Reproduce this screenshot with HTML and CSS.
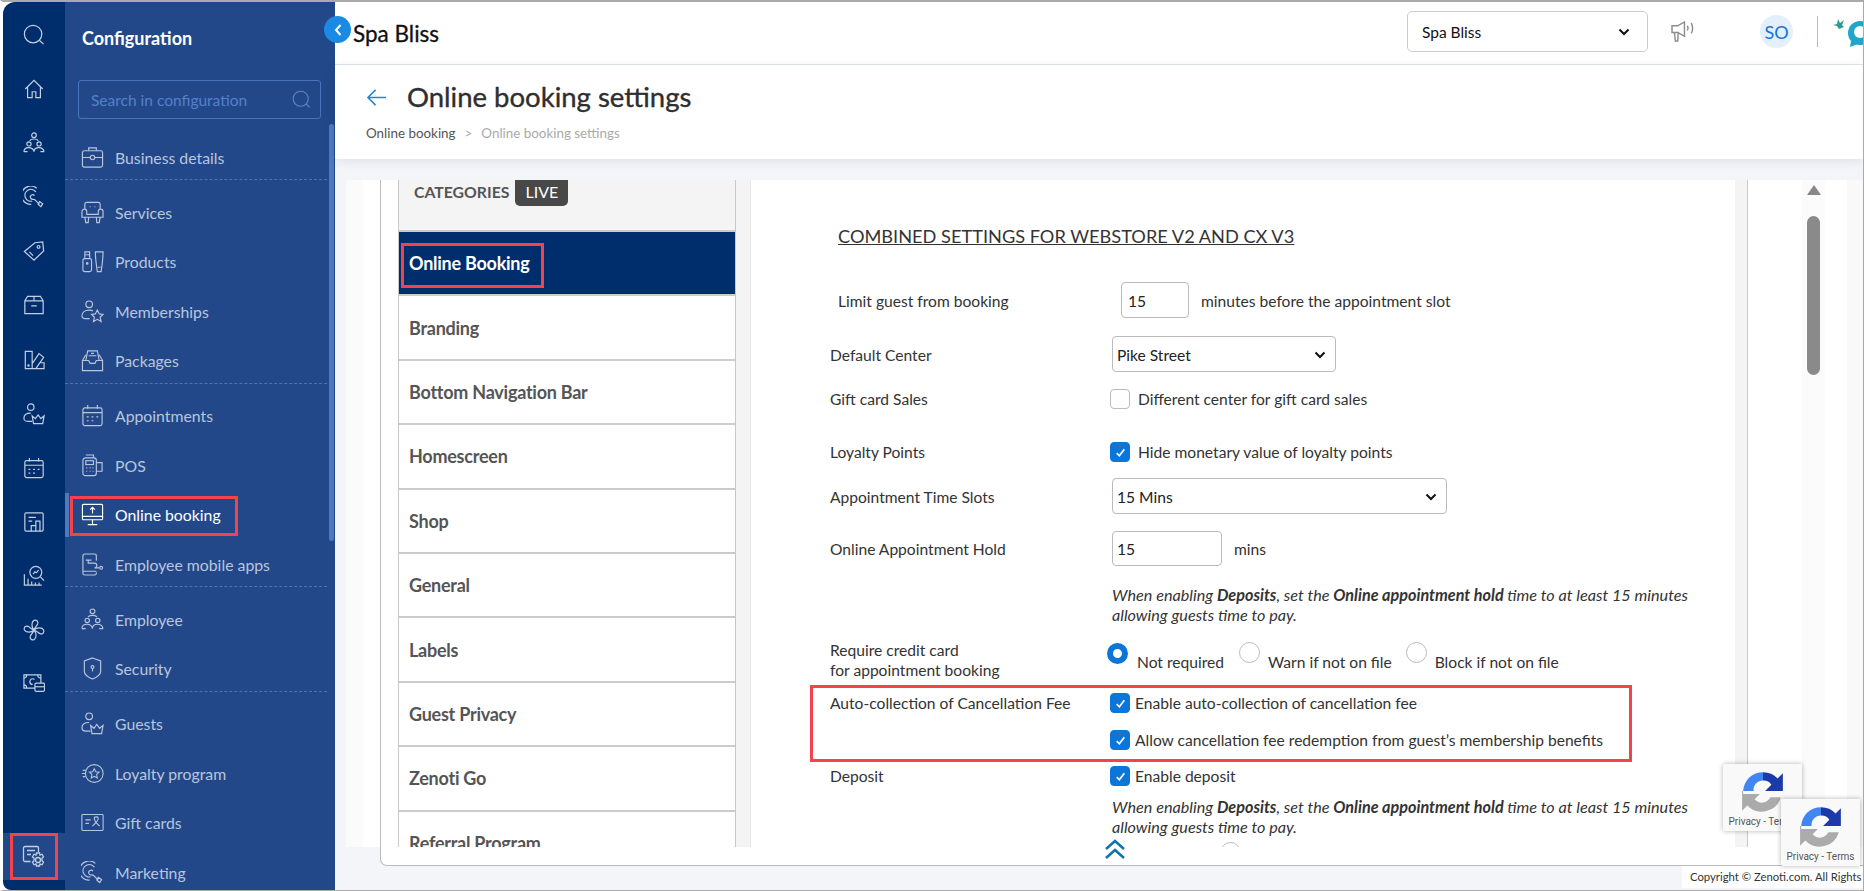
FILE: index.html
```html
<!DOCTYPE html>
<html lang="en">
<head>
    <meta charset="UTF-8">
    <title>Online booking settings</title>
    <link rel="stylesheet" href="styles.css">
</head>
<body>
<!-- icon set, reused by the rail and the config menu -->
<svg class="icon-defs" xmlns="http://www.w3.org/2000/svg">
    <symbol id="i-search" viewBox="0 0 24 24"><circle cx="11" cy="11" r="9.5"/><path d="M18 18l4.5 4"/></symbol>
    <symbol id="i-home" viewBox="0 0 24 24"><path d="M2.5 12L12 2.5 21.500 12M5 9.500V21.500h5V15h4v6.500h5V9.500"/></symbol>
    <symbol id="i-people" viewBox="0 0 24 24"><circle cx="12" cy="3.500" r="2.500"/><circle cx="6.500" cy="13" r="2.300"/><circle cx="17.500" cy="13" r="2.300"/><path d="M7.500 9.500c1-2.500 8-2.500 9 0M1 21.500c0-6 10-6 11 0M12 21.500c0-6 10-6 11 0M1 21.500h4M19 21.500h4"/></symbol>
    <symbol id="i-target" viewBox="0 0 24 24"><path d="M15 2.500A10 10 0 1 0 9 20M14 6.500a6.500 6.500 0 1 0-4 10M12.500 10.500a2.500 2.500 0 1 0-1.500 4l2 .5 5 5"/><path d="M18 17l3.500 2.500-2 3-3-2.500z"/></symbol>
    <symbol id="i-tag" viewBox="0 0 24 24"><path d="M1.500 12.500L13 3l8.500-1 1 10L12 22z"/><circle cx="17" cy="7.500" r="1.500"/><path d="M7 13l4 4"/></symbol>
    <symbol id="i-box" viewBox="0 0 24 24"><path d="M2 7.500L5 2.500h14l3 5V21.500H2zM2 7.500h20M12 2.500v5M9 13h6"/></symbol>
    <symbol id="i-palette" viewBox="0 0 24 24"><path d="M2.500 2.500h7.500v19H2.500zM10 16l7.500-11 5 4L14 21.500M10 21.500h13V15h-5"/><circle cx="6" cy="18" r=".7"/></symbol>
    <symbol id="i-crown" viewBox="0 0 24 24"><circle cx="8.500" cy="4.500" r="3.500"/><path d="M10 20H5c-2.500 0-4-1.500-4-3.500C1 13 4 11 8.500 11"/><path d="M10 14l3.500 3 3-4 3 4 3.500-3-1.500 8.500h-10z"/></symbol>
    <symbol id="i-calendar" viewBox="0 0 24 24"><rect x="2" y="4" width="20" height="18.500" rx="2"/><path d="M7 1v4M17 1v4M2 9h20M6 13.500h2M11 13.500h2M16 13.500h2M6 17.500h2M11 17.500h2"/></symbol>
    <symbol id="i-chart" viewBox="0 0 24 24"><rect x="2" y="2" width="20" height="20" rx="1.500"/><path d="M6 7h8M6 11h4M9 22v-6h5v6M14 22V11h4.500v11"/></symbol>
    <symbol id="i-analytics" viewBox="0 0 24 24"><path d="M1.500 10v12h19M5.500 22v-7M9.500 22v-4M13.500 22v-3M17.500 22v-3"/><circle cx="14" cy="8" r="6.500"/><path d="M19 13l4 4M11 10l2-2.500 1.500 1L17 5.500"/></symbol>
    <symbol id="i-fan" viewBox="0 0 24 24"><path d="M12 12C9 9 9 3 12 1.500c3-1 5 1.500 4 4-1 2-3 3.500-4 6.500zM12 12c3-3 9-3 10.500 0 1 3-1.500 5-4 4-2-1-3.500-3-6.500-4zM12 12c3 3 3 9 0 10.500-3 1-5-1.500-4-4 1-2 3-3.500 4-6.500zM12 12c-3 3-9 3-10.500 0-1-3 1.500-5 4-4 2 1 3.500 3 6.500 4z"/></symbol>
    <symbol id="i-money" viewBox="0 0 24 24"><path d="M13 16.500H1V2h18.500v9"/><path d="M1 5.500c2 0 3-1.500 3-3.500M16 2c0 2 1 3.500 3.500 3.500M1 13c2 0 3 1.500 3 3.500M12.500 7c-2-1.500-5-.5-5 2.500 0 1.500 1 3 3 3"/><rect x="13" y="11" width="10.500" height="9" rx="1.500"/><path d="M13 15h10.500"/></symbol>
    <symbol id="i-settings" viewBox="0 0 24 24"><path d="M8.500 16.500H3a1.500 1.500 0 0 1-1.500-1.500V3A1.500 1.500 0 0 1 3 1.500h12A1.500 1.500 0 0 1 16.500 3v4M5 5.500h8M5 9.500h4"/><path d="M14.500 8h3l.5 2 2-.8 1.500 2.600-1.500 1.400v2.600l1.500 1.400-1.500 2.600-2-.8-.5 2h-3l-.5-2-2 .8-1.500-2.600 1.500-1.400v-2.600l-1.500-1.400 1.500-2.600 2 .8z"/><circle cx="16" cy="15" r="2.500"/></symbol>
    <symbol id="i-briefcase" viewBox="0 0 24 24"><rect x="1.500" y="5" width="21" height="17" rx="2"/><path d="M8 5V2h8v3M1.500 12H9.500M14.500 12h8"/><circle cx="12" cy="12" r="2.300"/></symbol>
    <symbol id="i-sofa" viewBox="0 0 24 24"><path d="M4 9V3.500A2 2 0 0 1 6 1.500h12A2 2 0 0 1 20 3.500V9M1 11a2.500 2.500 0 0 1 5 0v3h12v-3a2.500 2.500 0 0 1 5 0v6H1zM4 17l1 5.500h2.500l.5-5.500M16 17l.5 5.500H19l1-5.500M9 6h1M14 6h1"/></symbol>
    <symbol id="i-bottles" viewBox="0 0 24 24"><path d="M2 11a2 2 0 0 1 2-2h5a2 2 0 0 1 2 2v9.500a2 2 0 0 1-2 2H4a2 2 0 0 1-2-2zM4 9V2h5v7M4 5h5M15 2h8c0 7-1 14-2 20.500h-4C16 16 15 9 15 2zM17.500 18h3"/><circle cx="6.500" cy="14" r=".8"/></symbol>
    <symbol id="i-member" viewBox="0 0 24 24"><circle cx="8.500" cy="4.500" r="3.500"/><path d="M9 19.500H4.500C2 19.500 1 18 1 16.500 1 13 4 10.500 8.500 10.500c1.500 0 3 .3 4 1"/><path d="M17 10.500l2 4 4 .5-3 3 1 4.500-4-2.300-4 2.300 1-4.500-3-3 4-.5z"/></symbol>
    <symbol id="i-tray" viewBox="0 0 24 24"><path d="M5 12l2-10h10l2 10M1.500 12H8l1.500 3h5L16 12h6.500v10.500h-21zM1.500 12l3.500-6M22.500 12L19 6M8 7h8M10.500 4.500h3"/></symbol>
    <symbol id="i-pos" viewBox="0 0 24 24"><rect x="2" y="4" width="14" height="18.500" rx="2.500"/><rect x="5" y="7" width="8" height="4"/><path d="M5 1h8v3M16 9h6v9h-6M5.500 14.500h1M9 14.500h1M12 14.500h1M5.500 18h1M9 18h1M12 18h1"/></symbol>
    <symbol id="i-monitor" viewBox="0 0 24 24"><rect x="1.500" y="1.500" width="21" height="16" rx="1"/><path d="M1.500 14h21M12 17.500v5M7 22.500h10M12 11V4.500M9.500 7L12 4.500 14.500 7"/></symbol>
    <symbol id="i-mobile" viewBox="0 0 24 24"><path d="M16 8V3a2 2 0 0 0-2-2H4A2 2 0 0 0 2 3v18a2 2 0 0 0 2 2h10a2 2 0 0 0 2-2v-1M2 19h14M5 7.500h6M7.500 7.500v3h6.500a2 2 0 0 1 0 5h5"/><circle cx="21" cy="15.500" r="1.500"/></symbol>
    <symbol id="i-shield" viewBox="0 0 24 24"><path d="M12 1l8.500 3v11c0 3-4 6-8.500 8-4.500-2-8.500-5-8.500-8V4z"/><circle cx="12" cy="10.500" r="1.500"/><path d="M12 12v3"/></symbol>
    <symbol id="i-loyalty" viewBox="0 0 26 24"><circle cx="15" cy="12" r="10"/><path d="M15 6.500l1.700 3.500 3.800.5-2.800 2.600.7 3.900-3.400-1.900-3.400 1.900.7-3.900-2.800-2.600 3.800-.5zM1 12h4M2 8.500h3M2 15.500h3"/></symbol>
    <symbol id="i-gift" viewBox="0 0 26 24"><rect x="1" y="3" width="24" height="18" rx="1"/><path d="M5 9h6M5 13h4M17 12c-4-6-1-7 0-6 1-1 5 0 0 6l4 4M17 12l-4 4"/></symbol>
</svg>

<div class="app">
    <nav class="rail">
        <svg class="rail-icon"><use href="#i-search"/></svg>
        <svg class="rail-icon"><use href="#i-home"/></svg>
        <svg class="rail-icon"><use href="#i-people"/></svg>
        <svg class="rail-icon"><use href="#i-target"/></svg>
        <svg class="rail-icon"><use href="#i-tag"/></svg>
        <svg class="rail-icon"><use href="#i-box"/></svg>
        <svg class="rail-icon"><use href="#i-palette"/></svg>
        <svg class="rail-icon"><use href="#i-crown"/></svg>
        <svg class="rail-icon"><use href="#i-calendar"/></svg>
        <svg class="rail-icon"><use href="#i-chart"/></svg>
        <svg class="rail-icon"><use href="#i-analytics"/></svg>
        <svg class="rail-icon"><use href="#i-fan"/></svg>
        <svg class="rail-icon"><use href="#i-money"/></svg>
        <div class="rail-settings"><svg class="rail-icon"><use href="#i-settings"/></svg></div>
    </nav>

    <aside class="panel">
        <h1 class="panel-title">Configuration</h1>
        <div class="panel-search">
            <span>Search in configuration</span>
            <svg class="panel-search-icon"><use href="#i-search"/></svg>
        </div>
        <div class="menu">
            <div class="menu-group">
                <a class="menu-item"><svg><use href="#i-briefcase"/></svg>Business details</a>
            </div>
            <div class="menu-group">
                <a class="menu-item"><svg><use href="#i-sofa"/></svg>Services</a>
                <a class="menu-item"><svg><use href="#i-bottles"/></svg>Products</a>
                <a class="menu-item"><svg><use href="#i-member"/></svg>Memberships</a>
                <a class="menu-item"><svg><use href="#i-tray"/></svg>Packages</a>
            </div>
            <div class="menu-group">
                <a class="menu-item"><svg><use href="#i-calendar"/></svg>Appointments</a>
                <a class="menu-item"><svg><use href="#i-pos"/></svg>POS</a>
                <a class="menu-item active"><svg><use href="#i-monitor"/></svg>Online booking</a>
                <a class="menu-item"><svg><use href="#i-mobile"/></svg>Employee mobile apps</a>
            </div>
            <div class="menu-group">
                <a class="menu-item"><svg><use href="#i-people"/></svg>Employee</a>
                <a class="menu-item"><svg><use href="#i-shield"/></svg>Security</a>
            </div>
            <div class="menu-group last">
                <a class="menu-item"><svg><use href="#i-crown"/></svg>Guests</a>
                <a class="menu-item"><svg><use href="#i-loyalty"/></svg>Loyalty program</a>
                <a class="menu-item"><svg><use href="#i-gift"/></svg>Gift cards</a>
                <a class="menu-item"><svg><use href="#i-target"/></svg>Marketing</a>
            </div>
        </div>
        <div class="panel-scroll"></div>
    </aside>

    <main class="main">
        <header class="topbar">
            <div class="org-name">Spa Bliss</div>
            <div class="org-select">
                <span>Spa Bliss</span>
                <svg class="chevron" viewBox="0 0 12 8"><path d="M1.500 1.500L6 6l4.500-4.500"/></svg>
            </div>
            <svg class="megaphone" viewBox="0 0 26 24">
                <path d="M1 6h6l7-4v15l-7-4H1zM3.500 13h4l-.5 9H4.500zM17 6c1 1.500 1 3.500 0 5M21 3c2 3 2 8 0 11"/>
            </svg>
            <div class="avatar">SO</div>
            <div class="top-divider"></div>
            <svg class="chat-logo" viewBox="0 0 30 30">
                <path class="chat-hand" d="M0 8l4-1 1-5 2 4 4-3-2 5 2 2-5 2-2-3z"/>
                <circle class="chat-bubble" cx="27" cy="16" r="12"/>
                <path class="chat-tail" d="M18 24l-1 6 8-3z"/>
                <circle class="chat-face" cx="27" cy="15" r="6"/>
            </svg>
        </header>

        <section class="page-head">
            <div class="page-title-row">
                <svg class="back-arrow" viewBox="0 0 22 20"><path d="M21 10H2M10 2l-8 8 8 8"/></svg>
                <h2 class="page-title">Online booking settings</h2>
            </div>
            <div class="crumbs">
                <span>Online booking</span>
                <span class="crumb-sep">&gt;</span>
                <span class="crumb-current">Online booking settings</span>
            </div>
        </section>

        <section class="content">
            <div class="content-row">
                <div class="gutter"></div>
                <div class="card">
                    <div class="card-inner">
                        <div class="categories">
                            <div class="cat-head">
                                <span>CATEGORIES</span>
                                <span class="live">LIVE</span>
                            </div>
                            <div class="cat-item selected">Online Booking</div>
                            <div class="cat-item">Branding</div>
                            <div class="cat-item">Bottom Navigation Bar</div>
                            <div class="cat-item">Homescreen</div>
                            <div class="cat-item">Shop</div>
                            <div class="cat-item">General</div>
                            <div class="cat-item">Labels</div>
                            <div class="cat-item">Guest Privacy</div>
                            <div class="cat-item">Zenoti Go</div>
                            <div class="cat-item">Referral Program</div>
                        </div>
                        <div class="side-strip"></div>

                        <div class="form-pane">
                            <h3 class="form-heading">COMBINED SETTINGS FOR WEBSTORE V2 AND CX V3</h3>

                            <div class="row row-input row-limit">
                                <label class="row-label">Limit guest from booking</label>
                                <div class="field field-small">15</div>
                                <span class="after-field">minutes before the appointment slot</span>
                            </div>
                            <div class="row row-input row-center">
                                <label class="row-label">Default Center</label>
                                <div class="field field-select field-center">Pike Street
                                    <svg class="chevron" viewBox="0 0 12 8"><path d="M1.500 1.500L6 6l4.500-4.500"/></svg>
                                </div>
                            </div>
                            <div class="row row-check row-gift">
                                <label class="row-label">Gift card Sales</label>
                                <span class="check"></span>
                                <span class="check-text">Different center for gift card sales</span>
                            </div>
                            <div class="row row-check row-loyalty">
                                <label class="row-label">Loyalty Points</label>
                                <span class="check on"><svg viewBox="0 0 12 12"><path d="M2.500 6.500l2.500 2.500 4.500-6"/></svg></span>
                                <span class="check-text">Hide monetary value of loyalty points</span>
                            </div>
                            <div class="row row-input row-slots">
                                <label class="row-label">Appointment Time Slots</label>
                                <div class="field field-select field-slots">15 Mins
                                    <svg class="chevron" viewBox="0 0 12 8"><path d="M1.500 1.500L6 6l4.500-4.500"/></svg>
                                </div>
                            </div>
                            <div class="row row-hold">
                                <label class="row-label">Online Appointment Hold</label>
                                <div class="field field-hold">15</div>
                                <span class="after-hold">mins</span>
                            </div>
                            <p class="note note-first">When enabling <b>Deposits</b>, set the <b>Online appointment hold</b> time to at least 15 minutes<br>allowing guests time to pay.</p>
                            <div class="row row-radio">
                                <label class="row-label">Require credit card<br>for appointment booking</label>
                                <span class="radio on"></span><span class="radio-text text-first">Not required</span>
                                <span class="radio second"></span><span class="radio-text">Warn if not on file</span>
                                <span class="radio third"></span><span class="radio-text">Block if not on file</span>
                            </div>
                            <div class="row row-check row-auto">
                                <label class="row-label">Auto-collection of Cancellation Fee</label>
                                <span class="check on"><svg viewBox="0 0 12 12"><path d="M2.500 6.500l2.500 2.500 4.500-6"/></svg></span>
                                <span class="check-text narrow">Enable auto-collection of cancellation fee</span>
                            </div>
                            <div class="row row-check row-allow">
                                <label class="row-label"></label>
                                <span class="check on"><svg viewBox="0 0 12 12"><path d="M2.500 6.500l2.500 2.500 4.500-6"/></svg></span>
                                <span class="check-text narrow">Allow cancellation fee redemption from guest’s membership benefits</span>
                            </div>
                            <div class="row row-check row-allow">
                                <label class="row-label">Deposit</label>
                                <span class="check on"><svg viewBox="0 0 12 12"><path d="M2.500 6.500l2.500 2.500 4.500-6"/></svg></span>
                                <span class="check-text narrow">Enable deposit</span>
                            </div>
                            <p class="note note-second">When enabling <b>Deposits</b>, set the <b>Online appointment hold</b> time to at least 15 minutes<br>allowing guests time to pay.</p>
                            <div class="row row-last">
                                <label class="row-label"></label>
                                <span class="radio cut"></span>
                            </div>
                        </div>

                        <div class="side-strip right"></div>
                        <div class="blank"></div>
                        <div class="scroll-track">
                            <span class="scroll-up"></span>
                            <span class="scroll-thumb"></span>
                        </div>
                        <div class="blank"></div>
                        <div class="pale-edge"></div>
                    </div>
                </div>
            </div>
            <div class="copyright"><span>Copyright © Zenoti.com. All Rights Reserved.</span></div>
        </section>
    </main>

    <!-- things that sit on top of the page -->
    <button class="collapse"><svg viewBox="0 0 10 14"><path d="M7.500 2L3 7l4.500 5"/></svg></button>

    <svg class="scroll-top" viewBox="0 0 22 20"><path d="M2 10l9-8 9 8M2 19l9-8 9 8"/></svg>

    <div class="captcha captcha-back">
        <svg class="captcha-logo"><use href="#i-captcha"/></svg>
        <span>Privacy - Terms</span>
    </div>
    <div class="captcha captcha-front">
        <svg class="captcha-logo"><use href="#i-captcha"/></svg>
        <span>Privacy - Terms</span>
    </div>

    <div class="mark mark-rail"></div>
    <div class="mark mark-menu"></div>
    <div class="mark mark-cat"></div>
    <div class="mark mark-auto"></div>
</div>

<svg class="icon-defs" xmlns="http://www.w3.org/2000/svg">
    <symbol id="i-captcha" viewBox="0 0 44 44">
        <path d="M22 3a19 19 0 0 1 14 6l5-5v17H24l6-6a9 9 0 0 0-8-4z" fill="#1c3aa9"/>
        <path d="M22 3A19 19 0 0 0 3 21h10a9 9 0 0 1 9-10z" fill="#4285f4"/>
        <path d="M3 21l-1 0v19l5-5a19 19 0 0 0 32-8H29a9 9 0 0 1-15 2l5-5H3z" fill="#ababab"/>
    </symbol>
</svg>
</body>
</html>
```
FILE: styles.css
```css
* {
    box-sizing: border-box;
}

html, body {
    margin: 0;
    height: 100%;
    overflow: hidden;
}

body {
    font-family: Lato, "Open Sans", sans-serif;
    background-color: #fff;
    color: #333;
}

.icon-defs {
    position: absolute;
    width: 0;
    height: 0;
}

.app {
    position: relative;
    display: flex;
    width: 1864px;
    height: 891px;
    border-top: 2px solid #aaa;
    border-right: 1px solid #aaa;
    border-left: 3px solid #fff;
    border-bottom: 1px solid #aaa;
    overflow: hidden;
}

/* left icon rail */
.rail {
    position: relative;
    width: 62px;
    flex-shrink: 0;
    background-color: #002e6d;
    border-radius: 12px 0 0 8px;
    display: flex;
    flex-direction: column;
    align-items: center;
    padding-top: 22px;
    gap: 32.100px;
}

.rail-icon {
    width: 22px;
    height: 22px;
    display: block;
    fill: none;
    stroke: #c3cfe2;
    stroke-width: 1.300;
}

.rail-settings {
    position: absolute;
    left: 0;
    right: 0;
    top: 831px;
    height: 47px;
    background-color: #234889;
    display: flex;
    align-items: center;
    justify-content: center;
}

.rail-settings .rail-icon {
    width: 24px;
    height: 24px;
}

/* config panel */
.panel {
    position: relative;
    width: 270px;
    flex-shrink: 0;
    background-color: #234889;
    padding-top: 25px;
}

.panel-title {
    margin: 0 0 0 17px;
    font-size: 18px;
    line-height: 22px;
    font-weight: 700;
    color: #fff;
}

.panel-search {
    display: flex;
    align-items: center;
    justify-content: space-between;
    margin: 31px 14px 0 13px;
    height: 39px;
    padding: 0 9px 0 12px;
    border: 1px solid #4a73bd;
    border-radius: 3px;
    color: #5580c9;
    font-size: 15.500px;
}

.panel-search-icon {
    width: 19px;
    height: 19px;
    fill: none;
    stroke: #5f86cb;
    stroke-width: 1.300;
}

.menu {
    margin-top: 16px;
    margin-right: 8px;
}

.menu-group {
    border-bottom: 1px dashed #4f72ad;
    margin-bottom: 10px;
    display: flex;
    flex-direction: column;
    gap: 5.500px;
}

.menu-group.last {
    border-bottom: none;
}

.menu-item {
    display: flex;
    align-items: center;
    height: 44px;
    padding-left: 16px;
    gap: 11px;
    font-size: 15.800px;
    color: #b9c6dd;
}

.menu-item svg {
    width: 23px;
    height: 23px;
    flex-shrink: 0;
    fill: none;
    stroke: #b9c6dd;
    stroke-width: 1.200;
}

.menu-item.active {
    color: #fff;
    box-shadow: inset 4px 0 0 #4f79bf;
}

.menu-item.active svg {
    stroke: #fff;
}

.panel-scroll {
    position: absolute;
    right: 1px;
    top: 122px;
    width: 5px;
    height: 417px;
    border-radius: 3px;
    background-color: #4f79bf;
}

/* top bar */
.main {
    flex: 1;
    min-width: 0;
    display: flex;
    flex-direction: column;
}

.topbar {
    height: 63px;
    display: flex;
    align-items: center;
    border-bottom: 1px solid #e1e5ee;
    padding-left: 18px;
    flex-shrink: 0;
}

.org-name {
    font-size: 22.500px;
    color: #111;
    width: 1054px;
    margin-top: 1px;
    -webkit-text-stroke: 0.3px #111;
}

.org-select {
    width: 241px;
    height: 41px;
    margin-top: -3px;
    border: 1px solid #ccc;
    border-radius: 5px;
    padding: 0 17px 0 14px;
    display: flex;
    align-items: center;
    justify-content: space-between;
    font-size: 15.500px;
    color: #111;
}

.chevron {
    width: 12px;
    height: 8px;
    flex-shrink: 0;
    fill: none;
    stroke: #111;
    stroke-width: 2;
}

.megaphone {
    width: 25px;
    height: 23px;
    margin: -3px 0 0 23px;
    fill: none;
    stroke: #8d8d8d;
    stroke-width: 1.500;
}

.avatar {
    width: 33px;
    height: 33px;
    margin: -3px 0 0 64px;
    border-radius: 50%;
    background-color: #e3f0fb;
    color: #1474d4;
    font-size: 18px;
    display: flex;
    align-items: center;
    justify-content: center;
}

.top-divider {
    width: 1px;
    height: 31px;
    margin: -3px 0 0 24px;
    background-color: #bbb;
}

.chat-logo {
    width: 30px;
    height: 30px;
    margin: -3px 0 0 15px;
    flex-shrink: 0;
}

.chat-hand {
    fill: #2a9d8f;
}

.chat-bubble, .chat-tail {
    fill: #1fa6c9;
}

.chat-face {
    fill: #fff;
}

/* page heading */
.page-head {
    height: 94px;
    flex-shrink: 0;
    padding: 15px 0 0 31px;
    box-shadow: 0 2px 10px rgba(30, 40, 70, 0.1);
    position: relative;
}

.page-title-row {
    display: flex;
    align-items: center;
    gap: 20px;
}

.back-arrow {
    width: 21px;
    height: 19px;
    fill: none;
    stroke: #1a86e0;
    stroke-width: 1.600;
}

.page-title {
    margin: 0;
    font-size: 27.500px;
    line-height: 34px;
    font-weight: 400;
    color: #2e2e2e;
    -webkit-text-stroke: 0.35px #2e2e2e;
}

.crumbs {
    margin-top: 10px;
    font-size: 13.400px;
    line-height: 18px;
    color: #555;
    display: flex;
    gap: 9px;
}

.crumb-sep, .crumb-current {
    color: #aaa;
}

/* content */
.content {
    flex: 1;
    background-color: #f3f5f9;
    padding-top: 21px;
    min-height: 0;
}

.content-row {
    display: flex;
    margin-left: 11px;
    height: 686px;
}

.gutter {
    width: 34px;
    height: 667px;
    background: linear-gradient(to right, #fbfbfb 17px, #fff 17px);
}

.card {
    flex: 1;
    min-width: 0;
    background-color: #fff;
    border-left: 1px solid #bbb;
    border-bottom: 1px solid #bbb;
    border-radius: 0 0 0 7px;
}

.card-inner {
    height: 667px;
    display: flex;
    padding-left: 17px;
    overflow: hidden;
}

.categories {
    width: 338px;
    flex-shrink: 0;
    background-color: #f4f4f4;
    border-left: 1px solid #c8c8c8;
    border-right: 1px solid #c8c8c8;
}

.cat-head {
    height: 52px;
    display: flex;
    align-items: flex-start;
    padding-left: 15px;
    gap: 6px;
    color: #555;
    font-size: 15.800px;
    font-weight: 700;
    line-height: 23px;
    border-bottom: 2px solid #ccc;
}

.live {
    width: 53px;
    height: 26px;
    background-color: #484848;
    color: #fff;
    border-radius: 0 0 5px 5px;
    text-align: center;
    font-weight: 400;
    font-size: 16px;
    line-height: 24px;
}

.cat-item {
    height: 64.400px;
    background-color: #fff;
    border-bottom: 2px solid #ccc;
    padding-left: 10px;
    display: flex;
    align-items: center;
    font-size: 18px;
    font-weight: 700;
    color: #555;
    letter-spacing: -0.250px;
}

.cat-item.selected {
    background-color: #002e6d;
    color: #fff;
}

.side-strip {
    width: 15px;
    flex-shrink: 0;
    background-color: #f4f4f4;
    border-right: 1px solid #e6e6e6;
}

.side-strip.right {
    width: 13px;
    border-right: 1px solid #c8c8c8;
}

/* settings form */
.form-pane {
    width: 984px;
    flex-shrink: 0;
    padding: 45px 0 0 87px;
    font-size: 15.600px;
    color: #333;
}

.form-heading {
    margin: 0;
    font-size: 18.200px;
    line-height: 22px;
    font-weight: 400;
    text-decoration: underline;
    color: #333;
}

.row {
    display: flex;
    align-items: center;
    margin-left: -8px;
    white-space: nowrap;
}

.row-label {
    width: 280px;
    flex-shrink: 0;
    line-height: 20px;
}

.row-input .row-label, .row-input .after-field {
    padding-top: 1px;
}

.row-limit {
    margin-top: 35px;
    margin-left: 0;
    height: 36px;
}

.row-limit .row-label {
    width: 283px;
}

.field {
    height: 36px;
    border: 1px solid #bbb;
    border-radius: 4px;
    padding-left: 6px;
    padding-top: 1px;
    display: flex;
    align-items: center;
    color: #222;
    flex-shrink: 0;
}

.field-small {
    width: 68px;
}

.after-field {
    margin-left: 12px;
}

.row-center {
    margin-top: 18px;
}

.field-select {
    justify-content: space-between;
    padding-left: 4px;
    padding-right: 9px;
    margin-left: 2px;
}

.field-center {
    width: 224px;
}

.field-slots {
    width: 335px;
}

.row-gift {
    margin-top: 17px;
}

.row-check {
    height: 20px;
}

.check {
    width: 20px;
    height: 20px;
    border: 1px solid #bbb;
    border-radius: 4px;
    flex-shrink: 0;
    display: flex;
    align-items: center;
    justify-content: center;
}

.check.on {
    background-color: #0b76d8;
    border-color: #0b76d8;
}

.check svg {
    width: 13px;
    height: 13px;
    fill: none;
    stroke: #fff;
    stroke-width: 1.600;
}

.check-text {
    margin-left: 8px;
}

.check-text.narrow {
    margin-left: 5px;
}

.row-loyalty {
    margin-top: 33px;
}

.row-slots {
    margin-top: 16px;
    height: 36px;
}

.row-hold {
    margin-top: 17px;
    height: 35px;
}

.field-hold {
    width: 110px;
    height: 35px;
    margin-left: 2px;
    padding-left: 4px;
}

.after-hold {
    margin-left: 12px;
}

.note {
    margin: 0 0 0 274px;
    font-size: 16.200px;
    line-height: 20px;
    font-style: italic;
    white-space: nowrap;
}

.note-first {
    margin-top: 19px;
}

.note-second {
    margin-top: 11px;
}

.row-radio {
    margin-top: 15px;
    height: 39px;
    align-items: flex-start;
}

.radio {
    width: 21px;
    height: 21px;
    border: 1px solid #bbb;
    border-radius: 50%;
    flex-shrink: 0;
    margin-top: 3px;
    background-color: #fff;
}

.radio.on {
    border: 6px solid #0b76d8;
    margin-left: -3px;
}

.radio.second {
    margin-left: 15px;
    margin-top: 2px;
}

.radio.third {
    margin-left: 14px;
    margin-top: 2px;
}

.radio-text {
    margin-left: 8px;
    margin-top: 12px;
    line-height: 20px;
}

.radio-text.text-first {
    margin-left: 9px;
}

.row-auto {
    margin-top: 14px;
}

.row-allow {
    margin-top: 16px;
}

.row-auto + .row-allow {
    margin-top: 17px;
}

.row-last {
    margin-top: 5px;
    height: 20px;
    align-items: flex-start;
}

.radio.cut {
    margin: 0 0 0 110px;
}

.blank {
    width: 54px;
    flex-shrink: 0;
}

.blank + .scroll-track + .blank {
    width: 22px;
}

.scroll-track {
    position: relative;
    width: 23px;
    flex-shrink: 0;
    background-color: #fbfbfb;
    display: flex;
    flex-direction: column;
    align-items: center;
}

.scroll-up {
    width: 0;
    height: 0;
    margin-top: 5px;
    border-left: 7.500px solid transparent;
    border-right: 7.500px solid transparent;
    border-bottom: 10px solid #888;
}

.scroll-thumb {
    width: 13px;
    height: 159px;
    margin-top: 21px;
    border-radius: 7px;
    background-color: #8a8a8a;
}

.pale-edge {
    flex: 1;
    background-color: #f9f9f9;
}

.copyright {
    margin-left: 1347px;
    height: 22px;
    background-color: #fff;
    overflow: hidden;
    white-space: nowrap;
    font-size: 11.300px;
    line-height: 22px;
    padding-left: 8px;
    color: #333;
}

/* overlays */
.collapse {
    position: absolute;
    left: 321px;
    top: 14px;
    width: 27px;
    height: 27px;
    padding: 0;
    border: none;
    border-radius: 50%;
    background-color: #1a8ae4;
    display: flex;
    align-items: center;
    justify-content: center;
}

.collapse svg {
    width: 10px;
    height: 14px;
    fill: none;
    stroke: #fff;
    stroke-width: 2;
}

.scroll-top {
    position: absolute;
    left: 1101px;
    top: 837px;
    width: 22px;
    height: 20px;
    fill: none;
    stroke: #0f73b0;
    stroke-width: 2.500;
}

.captcha {
    position: absolute;
    width: 79px;
    height: 67px;
    background-color: #f9f9f9;
    box-shadow: 0 0 5px rgba(0, 0, 0, 0.3);
    border-radius: 2px 0 0 2px;
    display: flex;
    flex-direction: column;
    align-items: center;
    padding-top: 5px;
    font-family: Roboto, sans-serif;
    font-size: 10px;
    color: #555;
    white-space: nowrap;
}

.captcha-logo {
    width: 46px;
    height: 46px;
    margin-bottom: 1px;
}

.captcha-back {
    left: 1720px;
    top: 762px;
}

.captcha-front {
    left: 1778px;
    top: 797px;
}

/* red annotation boxes */
.mark {
    position: absolute;
    border: 3px solid #f4434a;
}

.mark-rail {
    left: 7px;
    top: 831px;
    width: 48px;
    height: 47px;
}

.mark-menu {
    left: 67px;
    top: 494px;
    width: 168px;
    height: 40px;
}

.mark-cat {
    left: 398px;
    top: 241px;
    width: 143px;
    height: 45px;
}

.mark-auto {
    left: 807px;
    top: 683px;
    width: 822px;
    height: 77px;
}
```
